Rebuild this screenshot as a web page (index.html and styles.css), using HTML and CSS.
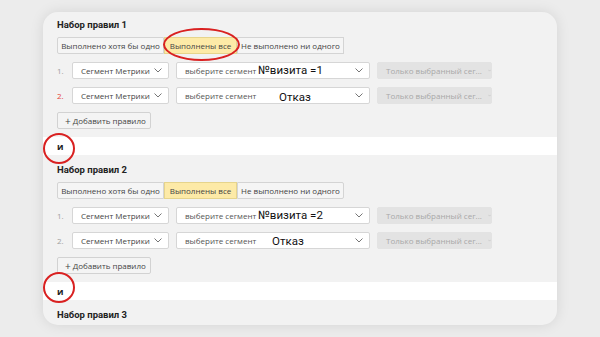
FILE: index.html
```html
<!DOCTYPE html>
<html lang="ru">
<head>
<meta charset="utf-8">
<title>Наборы правил</title>
<link rel="stylesheet" href="styles.css">
</head>
<body>
<div class="card">
  <section class="set">
    <h3 class="title">Набор правил 1</h3>
    <div class="seg">
      <span class="seg-item w1">Выполнено хотя бы одно</span>
      <span class="seg-item w2 active">Выполнены все</span>
      <span class="seg-item w1">Не выполнено ни одного</span>
      <span class="ring ring-seg"></span>
    </div>
    <div class="row">
      <span class="num">1.</span>
      <span class="sel sel-a">Сегмент Метрики<svg class="chev" viewBox="0 0 8 5"><path d="M0.5 0.5L4 4L7.5 0.5"/></svg></span>
      <span class="sel sel-b">выберите сегмент<span class="note n1">№визита =1</span><svg class="chev" viewBox="0 0 8 5"><path d="M0.5 0.5L4 4L7.5 0.5"/></svg></span>
      <span class="sel sel-c">Только выбранный сег...<svg class="chev" viewBox="0 0 8 5"><path d="M0.5 0.5L4 4L7.5 0.5"/></svg></span>
    </div>
    <div class="row">
      <span class="num red">2.</span>
      <span class="sel sel-a">Сегмент Метрики<svg class="chev" viewBox="0 0 8 5"><path d="M0.5 0.5L4 4L7.5 0.5"/></svg></span>
      <span class="sel sel-b">выберите сегмент<span class="note n2">Отказ</span><svg class="chev" viewBox="0 0 8 5"><path d="M0.5 0.5L4 4L7.5 0.5"/></svg></span>
      <span class="sel sel-c">Только выбранный сег...<svg class="chev" viewBox="0 0 8 5"><path d="M0.5 0.5L4 4L7.5 0.5"/></svg></span>
    </div>
    <div class="row"><span class="add"><span class="plus">+</span>Добавить правило</span></div>
  </section>
  <div class="band"><b>и</b><span class="ring ring-and r1"></span></div>

  <section class="set">
    <h3 class="title">Набор правил 2</h3>
    <div class="seg">
      <span class="seg-item w1">Выполнено хотя бы одно</span>
      <span class="seg-item w2 active">Выполнены все</span>
      <span class="seg-item w1">Не выполнено ни одного</span>
    </div>
    <div class="row">
      <span class="num">1.</span>
      <span class="sel sel-a">Сегмент Метрики<svg class="chev" viewBox="0 0 8 5"><path d="M0.5 0.5L4 4L7.5 0.5"/></svg></span>
      <span class="sel sel-b">выберите сегмент<span class="note n1">№визита =2</span><svg class="chev" viewBox="0 0 8 5"><path d="M0.5 0.5L4 4L7.5 0.5"/></svg></span>
      <span class="sel sel-c">Только выбранный сег...<svg class="chev" viewBox="0 0 8 5"><path d="M0.5 0.5L4 4L7.5 0.5"/></svg></span>
    </div>
    <div class="row">
      <span class="num">2.</span>
      <span class="sel sel-a">Сегмент Метрики<svg class="chev" viewBox="0 0 8 5"><path d="M0.5 0.5L4 4L7.5 0.5"/></svg></span>
      <span class="sel sel-b">выберите сегмент<span class="note n3">Отказ</span><svg class="chev" viewBox="0 0 8 5"><path d="M0.5 0.5L4 4L7.5 0.5"/></svg></span>
      <span class="sel sel-c">Только выбранный сег...<svg class="chev" viewBox="0 0 8 5"><path d="M0.5 0.5L4 4L7.5 0.5"/></svg></span>
    </div>
    <div class="row"><span class="add"><span class="plus">+</span>Добавить правило</span></div>
  </section>
  <div class="band"><b>и</b><span class="ring ring-and r2"></span></div>

  <section class="set last">
    <h3 class="title">Набор правил 3</h3>
  </section>
</div>
</body>
</html>
```

FILE: styles.css
```css
* { box-sizing: border-box; }
html, body { margin: 0; }
body {
  width: 600px;
  height: 337px;
  overflow: hidden;
  background: #ececec;
  font-family: "Open Sans", "Noto Sans", sans-serif;
  color: #333;
  padding: 12px 0 0 43px;
}
.card {
  position: relative;
  width: 514px;
  height: 313px;
  background: #f2f2f2;
  border-radius: 15px;
  box-shadow: 0 0 14px rgba(0,0,0,0.10);
  padding-top: 6px;
  display: flex;
  flex-direction: column;
}
.set {
  padding: 0 0 0 14px;
  display: flex;
  flex-direction: column;
  gap: 8px;
}
.title {
  margin: 0 0 -3px;
  font-family: Roboto, "Open Sans", sans-serif;
  font-size: 9.5px;
  font-weight: 700;
  line-height: 14px;
  color: #222;
}
.seg {
  position: relative;
  display: flex;
  height: 17px;
  width: 287px;
}
.seg-item {
  display: flex;
  align-items: center;
  justify-content: center;
  height: 17px;
  font-size: 8px;
  color: #444;
  background: #f5f5f5;
  border: 1px solid #d4d4d4;
  white-space: nowrap;
}
.seg-item.w1 { width: 107px; }
.seg-item.w2 { width: 73px; border-left: 0; border-right: 0; }
.seg-item:first-child { border-radius: 2px 0 0 2px; }
.seg-item:last-of-type { border-radius: 0 2px 2px 0; }
.seg-item.active {
  background: #fdeaa7;
  border: 1px solid #e6d48c;
}
.row {
  display: flex;
  align-items: center;
  height: 17px;
}
.num {
  width: 15px;
  font-size: 8px;
  color: #a0a0a0;
}
.num.red { color: #e5453d; }
.sel {
  position: relative;
  display: flex;
  align-items: center;
  height: 17px;
  padding: 0 0 0 8px;
  font-size: 8px;
  background: #fff;
  border: 1px solid #d6d6d6;
  border-radius: 2px;
  white-space: nowrap;
  color: #444;
}
.sel-a { width: 97px; margin-right: 7px; }
.sel-b { width: 194px; margin-right: 7px; color: #555; }
.sel-c { width: 115px; background: #e3e3e3; border-color: #e3e3e3; color: #a8a8a8; }
.chev {
  width: 8px;
  height: 5px;
  margin-left: auto;
  margin-right: 6px;
  fill: none;
  stroke: #666;
  stroke-width: 0.9;
}
.sel-c .chev { stroke: #aaa; margin-left: 6px; margin-right: 0; }
.note {
  position: absolute;
  top: 50%;
  transform: translateY(-50%);
  font-family: Roboto, "Open Sans", sans-serif;
  font-size: 11.5px;
  color: #111;
  line-height: 1;
}
.n1 { left: 81px; }
.n2 { left: 102px; margin-top: 2px; }
.n3 { left: 95px; margin-top: 1px; }
.add {
  display: flex;
  align-items: center;
  height: 17px;
  width: 94px;
  padding-left: 7px;
  font-size: 8px;
  color: #444;
  background: #f4f4f4;
  border: 1px solid #d2d2d2;
  border-radius: 2px;
}
.plus { font-size: 10px; line-height: 1; margin-right: 2px; }
.band {
  position: relative;
  height: 18px;
  margin: 8px 0 8px;
  background: #fff;
  padding-left: 14px;
  display: flex;
  align-items: center;
  font-size: 9px;
  color: #222;
}
.last { margin-top: 0; }
.ring {
  position: absolute;
  border: 2px solid #d92121;
  border-radius: 50%;
  pointer-events: none;
}
.ring-seg {
  left: 106px;
  top: -9px;
  width: 77px;
  height: 33px;
}
.ring-and { left: 0; width: 32px; height: 31px; }
.r1 { top: -4px; }
.r2 { top: -10px; }
```
